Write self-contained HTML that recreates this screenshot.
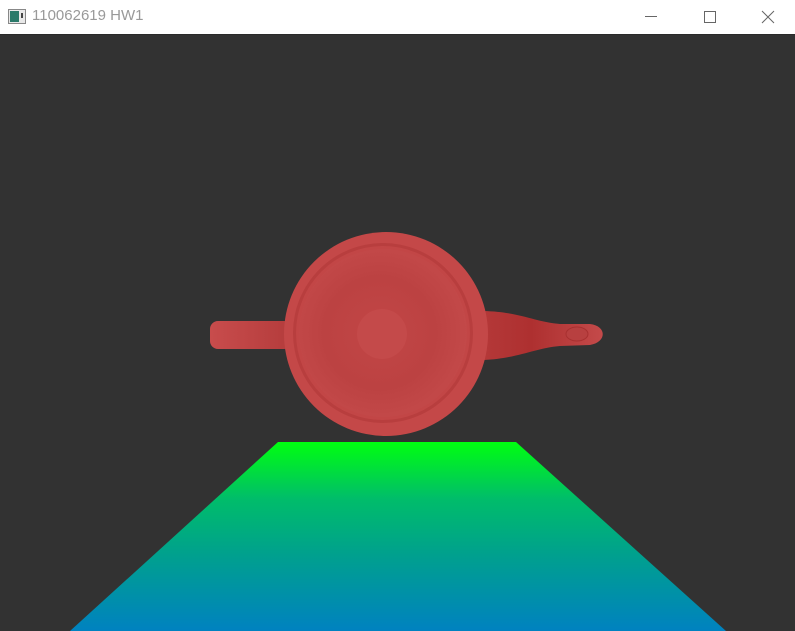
<!DOCTYPE html>
<html><head><style>
html,body{margin:0;padding:0;width:795px;height:631px;overflow:hidden;background:#323232;font-family:"Segoe UI","Liberation Sans",sans-serif}
.tb{position:absolute;left:0;top:0;width:795px;height:34px;background:#fff;border-bottom:1px solid #2a2a2a}
.t{position:absolute;left:32px;top:7px;font-size:15px;color:#999}
</style></head><body>
<div class="tb">
<svg style="position:absolute;left:8px;top:9px" width="18" height="15"><rect x="0.5" y="0.5" width="17" height="14" fill="#e8e8e8" stroke="#888"/><rect x="2" y="2" width="9" height="11" fill="#2a7a6a"/><rect x="13" y="4" width="2" height="5" fill="#444"/></svg>
<div class="t">110062619 HW1</div>
<svg style="position:absolute;left:640px;top:8px" width="140" height="18">
<line x1="5" y1="8.5" x2="17" y2="8.5" stroke="#666"/>
<rect x="64.5" y="3.5" width="11" height="11" fill="none" stroke="#666"/>
<path d="M122 3L134 15M134 3L122 15" stroke="#666"/>
</svg>
</div>
<svg style="position:absolute;left:0;top:35px" width="795" height="596" viewBox="0 35 795 596">
<defs>
<linearGradient id="g" x1="0" y1="0" x2="0" y2="1"><stop offset="0" stop-color="#00ff10"/><stop offset="0.3" stop-color="#00bd6a"/><stop offset="0.6" stop-color="#00a08e"/><stop offset="1" stop-color="#0082c0"/></linearGradient>
<radialGradient id="b" cx="0.48" cy="0.5" r="0.55"><stop offset="0" stop-color="#c24646"/><stop offset="0.6" stop-color="#bc4242"/><stop offset="1" stop-color="#c44a4a"/></radialGradient>
<linearGradient id="h" x1="0" y1="0" x2="1" y2="0"><stop offset="0" stop-color="#c84c4c"/><stop offset="1" stop-color="#b43c3c"/></linearGradient>
<linearGradient id="s" x1="0" y1="0" x2="1" y2="0"><stop offset="0" stop-color="#b43838"/><stop offset="0.4" stop-color="#ae3030"/><stop offset="1" stop-color="#c44a4a"/></linearGradient>
</defs>
<polygon points="278,442 516,442 726,631 70,631" fill="url(#g)"/>
<rect x="210" y="321" width="82" height="28" rx="8" fill="url(#h)"/>
<path d="M484 311 C520 312 535 322 560 324 L590 324 C607 326 607 342 590 345 L560 346 C535 348 520 358 484 360 Z" fill="url(#s)"/>
<ellipse cx="577" cy="334" rx="11" ry="7" fill="#b84040" stroke="#a83030" stroke-width="1"/>
<circle cx="386" cy="334" r="102" fill="#c44848"/>
<circle cx="383" cy="333" r="90" fill="#b83e3e"/>
<circle cx="383" cy="333" r="87" fill="#c24646"/>
<circle cx="383" cy="333" r="84" fill="url(#b)"/>
<circle cx="382" cy="334" r="25" fill="#c44a4a"/>
</svg>
</body></html>
